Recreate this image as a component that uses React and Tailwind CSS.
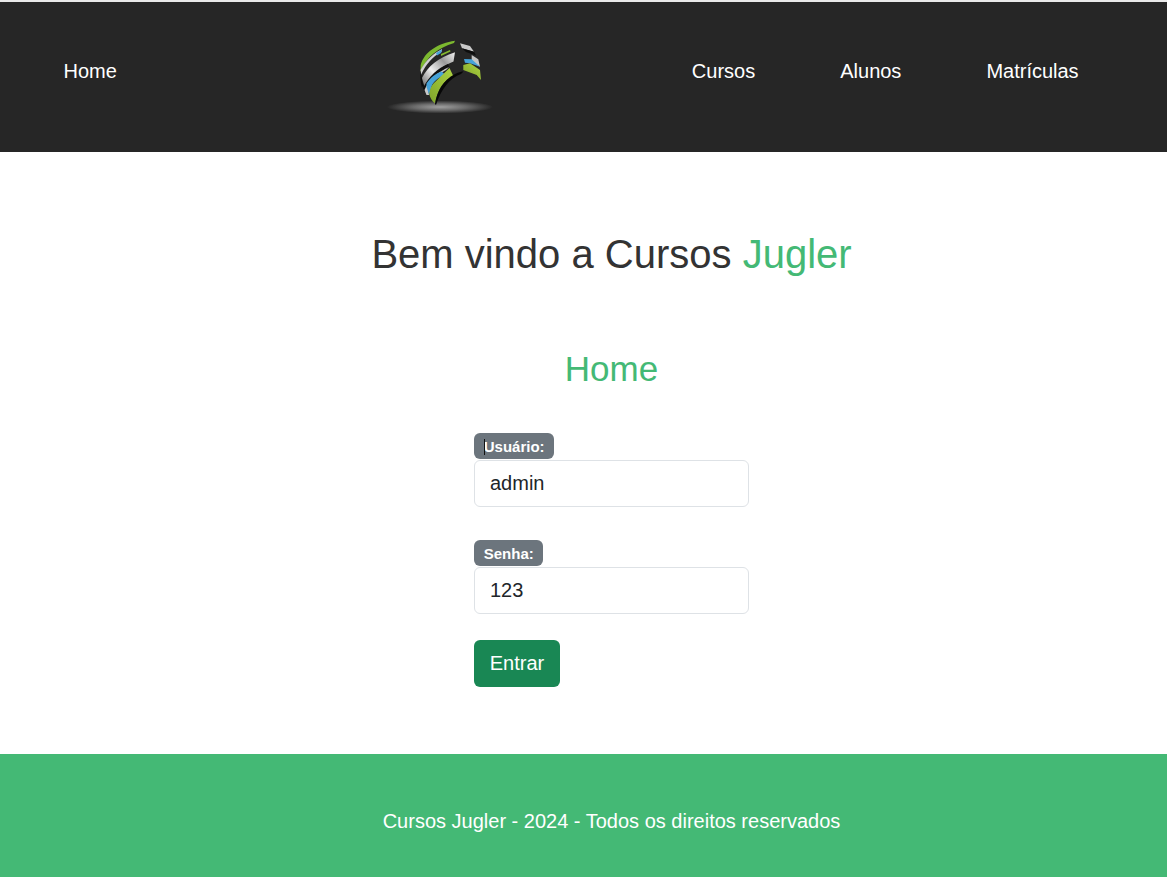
import React from "react";

function Logo() {
  return (
    <svg width="140" height="110" viewBox="0 0 140 110" className="block shrink-0">
      <defs>
        <radialGradient id="sh" cx="50%" cy="50%" r="50%">
          <stop offset="0%" stopColor="#a0a0a0" />
          <stop offset="50%" stopColor="#6a6a6a" />
          <stop offset="100%" stopColor="#262626" />
        </radialGradient>
        <linearGradient id="sil" x1="0" y1="1" x2="1" y2="0">
          <stop offset="0%" stopColor="#5f5f5f" />
          <stop offset="40%" stopColor="#f0f0f0" />
          <stop offset="70%" stopColor="#9a9a9a" />
          <stop offset="100%" stopColor="#f2f2f2" />
        </linearGradient>
        <linearGradient id="grn" x1="0" y1="1" x2="1" y2="0">
          <stop offset="0%" stopColor="#7fa52c" />
          <stop offset="100%" stopColor="#aed340" />
        </linearGradient>
      </defs>
      <ellipse cx="70" cy="87" rx="53" ry="6.500" fill="url(#sh)" />
      <path d="M50.700 45C54 32 68 23 85 20.700L84 23C68 28 57 36 50.500 52Z" fill="#7cb82f" />
      <path d="M50.500 50C56 40 64 33 72 29L71.500 32C63 36 56 44 51 55Z" fill="#d0d0d0" />
      <path d="M66 33L72 29.500L71 33L67 35.500Z" fill="#46a2d8" />
      <path d="M71 34L80 30L80.500 31.500L71 36Z" fill="#85b92f" />
      <path d="M50.500 50C50 56 50.500 62 52 68C56 55 68 42 85 32L85 34C70 42 58 54 54 70Z" fill="#0c0c0c" />
      <path d="M52 58C58 46 68 38 85 32.300L83.500 41.500C70 47 60 56 55 68.500Z" fill="url(#sil)" />
      <path d="M53 68C59 56 68 48 78 44L79 47C69 51 61 60 56.500 70L55 72Z" fill="#0f0f0f" />
      <path d="M54.500 70C59 59 68 52 79 47L76 50C68 54 62 62 58.500 71L59 75L56.500 75Z" fill="#c8c8c8" />
      <path d="M56.500 63.500C61 57 65 54 71.500 51.500L75 54.500C68 58 63 62 61.700 66L59.300 75L56.500 67Z" fill="#46a2d8" />
      <path d="M59.300 74C60 68 62 65 64 63L79.500 48L83.500 56.500C74 60 68 68 65 83.500C62 81 60 78 59.300 74Z" fill="url(#grn)" />
      <path d="M65 84C67 72 73 60 85 54C89 52 92 51.500 93.500 51.500L91 54C80 58 71 69 66 85Z" fill="#070707" />
      <path d="M90 23.300L100 26L104 31.700L92 28.300Z" fill="#c9c9c9" />
      <path d="M92 28.300L104 31.700L106 35.500L96 32Z" fill="#0d0d0d" />
      <path d="M101.700 35L108.300 39.300L110 46.700L101.700 41.700Z" fill="#c4c4c4" />
      <path d="M94 39L101.700 39.300L110 46.700L100 43.300L95 42.700Z" fill="#46a2d8" />
      <path d="M93.300 45L100 43.300L110 50L111 60L106.700 55L93.300 50Z" fill="url(#grn)" />
    </svg>
  );
}

function Field({ label, value, cursor, badgeW, mb }) {
  return (
    <div className={mb}>
      <div className={"relative flex h-[26px] items-center rounded-md bg-[#6c757d] pl-[9.750px] pt-[3px] text-[15px] font-bold text-white " + badgeW}>
        {label}
        {cursor && <span className="absolute left-[10px] top-[6px] h-[16px] w-px bg-[#111]" />}
      </div>
      <input
        readOnly
        value={value}
        className="mt-px block h-[47px] w-[275px] rounded-md border border-[#dee2e6] bg-white px-[15px] text-[20px] text-[#212529] outline-none"
      />
    </div>
  );
}

export default function App() {
  return (
    <div className="flex h-[877px] flex-col overflow-hidden bg-white font-['Liberation_Sans',Arial,sans-serif]">
      <div className="h-[2px] bg-[#e9e9e9]" />
      <header className="flex h-[150px] items-center bg-[#262626] pl-[63.500px] text-[20px] text-white">
        <a className="-mt-[12px]">Home</a>
        <div className="-mt-[4px] ml-[253px]"><Logo /></div>
        <nav className="-mt-[12px] ml-[182px] flex gap-[85px]">
          <a>Cursos</a>
          <a>Alunos</a>
          <a>Matrículas</a>
        </nav>
      </header>
      <main className="flex flex-1 flex-col items-center pl-[56px] pt-[78px]">
        <h1 className="text-[40px] leading-[48px] text-[#333]">
          Bem vindo a Cursos <span className="text-[#44b975]">Jugler</span>
        </h1>
        <h2 className="mt-[70px] text-[35px] leading-[42px] text-[#44b975]">Home</h2>
        <form className="mt-[43px] w-[275px]">
          <Field label="Usuário:" value="admin" cursor badgeW="w-[80px]" mb="mb-[33px]" />
          <Field label="Senha:" value="123" badgeW="w-[69px]" mb="mb-[26px]" />
          <button type="button" className="h-[47px] w-[86px] rounded-md bg-[#198754] pb-[2px] text-[20px] text-white">Entrar</button>
        </form>
      </main>
      <footer className="flex h-[123px] items-center justify-center bg-[#44b975] pl-[56px] pt-[10px] text-[20px] text-white">
        Cursos Jugler - 2024 - Todos os direitos reservados
      </footer>
    </div>
  );
}
